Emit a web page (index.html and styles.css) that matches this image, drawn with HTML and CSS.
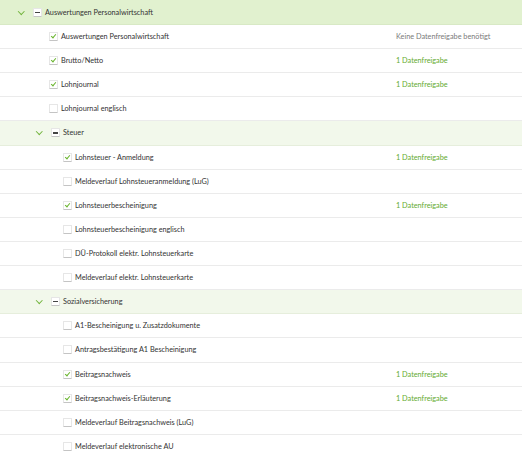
FILE: index.html
```html
<!DOCTYPE html>
<html lang="de">
<head>
    <meta charset="UTF-8">
    <title>Auswertungen</title>
    <link rel="stylesheet" href="styles.css">
</head>
<body>
    <div class="tree">
        <div class="row group top">
            <span class="chev"></span><span class="box partial"></span>
            <span class="label">Auswertungen Personalwirtschaft</span>
        </div>
        <div class="row leaf lvl1">
            <span class="box checked"></span><span class="label">Auswertungen Personalwirtschaft</span>
            <span class="status">Keine Datenfreigabe benötigt</span>
        </div>
        <div class="row leaf lvl1">
            <span class="box checked"></span><span class="label">Brutto/Netto</span>
            <span class="status ok">1 Datenfreigabe</span>
        </div>
        <div class="row leaf lvl1">
            <span class="box checked"></span><span class="label">Lohnjournal</span>
            <span class="status ok">1 Datenfreigabe</span>
        </div>
        <div class="row leaf lvl1">
            <span class="box"></span><span class="label">Lohnjournal englisch</span>
            <span class="status"></span>
        </div>

        <div class="row group sub">
            <span class="chev"></span><span class="box partial"></span>
            <span class="label">Steuer</span>
        </div>
        <div class="row leaf lvl2">
            <span class="box checked"></span><span class="label">Lohnsteuer - Anmeldung</span>
            <span class="status ok">1 Datenfreigabe</span>
        </div>
        <div class="row leaf lvl2">
            <span class="box"></span><span class="label">Meldeverlauf Lohnsteueranmeldung (LuG)</span>
            <span class="status"></span>
        </div>
        <div class="row leaf lvl2">
            <span class="box checked"></span><span class="label">Lohnsteuerbescheinigung</span>
            <span class="status ok">1 Datenfreigabe</span>
        </div>
        <div class="row leaf lvl2">
            <span class="box"></span><span class="label">Lohnsteuerbescheinigung englisch</span>
            <span class="status"></span>
        </div>
        <div class="row leaf lvl2">
            <span class="box"></span><span class="label">DÜ-Protokoll elektr. Lohnsteuerkarte</span>
            <span class="status"></span>
        </div>
        <div class="row leaf lvl2">
            <span class="box"></span><span class="label">Meldeverlauf elektr. Lohnsteuerkarte</span>
            <span class="status"></span>
        </div>

        <div class="row group sub">
            <span class="chev"></span><span class="box partial"></span>
            <span class="label">Sozialversicherung</span>
        </div>
        <div class="row leaf lvl2">
            <span class="box"></span><span class="label">A1-Bescheinigung u. Zusatzdokumente</span>
            <span class="status"></span>
        </div>
        <div class="row leaf lvl2">
            <span class="box"></span><span class="label">Antragsbestätigung A1 Bescheinigung</span>
            <span class="status"></span>
        </div>
        <div class="row leaf lvl2">
            <span class="box checked"></span><span class="label">Beitragsnachweis</span>
            <span class="status ok">1 Datenfreigabe</span>
        </div>
        <div class="row leaf lvl2">
            <span class="box checked"></span><span class="label">Beitragsnachweis-Erläuterung</span>
            <span class="status ok">1 Datenfreigabe</span>
        </div>
        <div class="row leaf lvl2">
            <span class="box"></span><span class="label">Meldeverlauf Beitragsnachweis (LuG)</span>
            <span class="status"></span>
        </div>
        <div class="row leaf lvl2 last">
            <span class="box"></span><span class="label">Meldeverlauf elektronische AU</span>
            <span class="status"></span>
        </div>
    </div>
</body>
</html>
```

FILE: styles.css
```css
body {
    margin: 0;
    background: #fff;
    font-family: Lato, "Open Sans", Arial, sans-serif;
    font-size: 7.3px;
    color: #333;
}
.tree {
    width: 522px;
}
.row {
    display: flex;
    align-items: center;
    height: 24.12px;
    box-sizing: border-box;
    border-bottom: 1px solid #ebebeb;
}
.row.top {
    height: 25px;
    background: #e1f1cf;
    border-bottom-color: #d8e9c5;
    padding-left: 18px;
}
.row.sub {
    background: #f2f8eb;
    border-bottom-color: #e6eedc;
    padding-left: 36px;
}
.row.lvl1 {
    padding-left: 49px;
}
.row.lvl2 {
    padding-left: 63px;
}
.row.last {
    border-bottom: none;
}
.chev {
    width: 6px;
    height: 5px;
    margin-right: 9px;
    position: relative;
}
.chev::before {
    content: "";
    position: absolute;
    left: 1px;
    top: -1px;
    width: 3.5px;
    height: 3.5px;
    border-right: 1.2px solid #72b43c;
    border-bottom: 1.2px solid #72b43c;
    transform: rotate(45deg);
}
.box {
    width: 7px;
    height: 7px;
    flex-shrink: 0;
    background: #fff;
    border: 1px solid #e6e6e6;
    border-bottom-color: #c4c4c4;
    border-radius: 1px;
    position: relative;
    margin-right: 3px;
}
.box.checked::after {
    content: "";
    position: absolute;
    left: 2.3px;
    top: 0;
    width: 2px;
    height: 4px;
    border-right: 1.4px solid #6ab52f;
    border-bottom: 1.4px solid #6ab52f;
    transform: rotate(40deg);
}
.box.partial::after {
    content: "";
    position: absolute;
    left: 1px;
    right: 1px;
    top: 3px;
    height: 1.2px;
    background: #444;
}
.label {
    flex: 1;
    white-space: nowrap;
}
.status {
    width: 126px;
    color: #7a7a7a;
}
.status.ok {
    color: #65ab30;
}
```
